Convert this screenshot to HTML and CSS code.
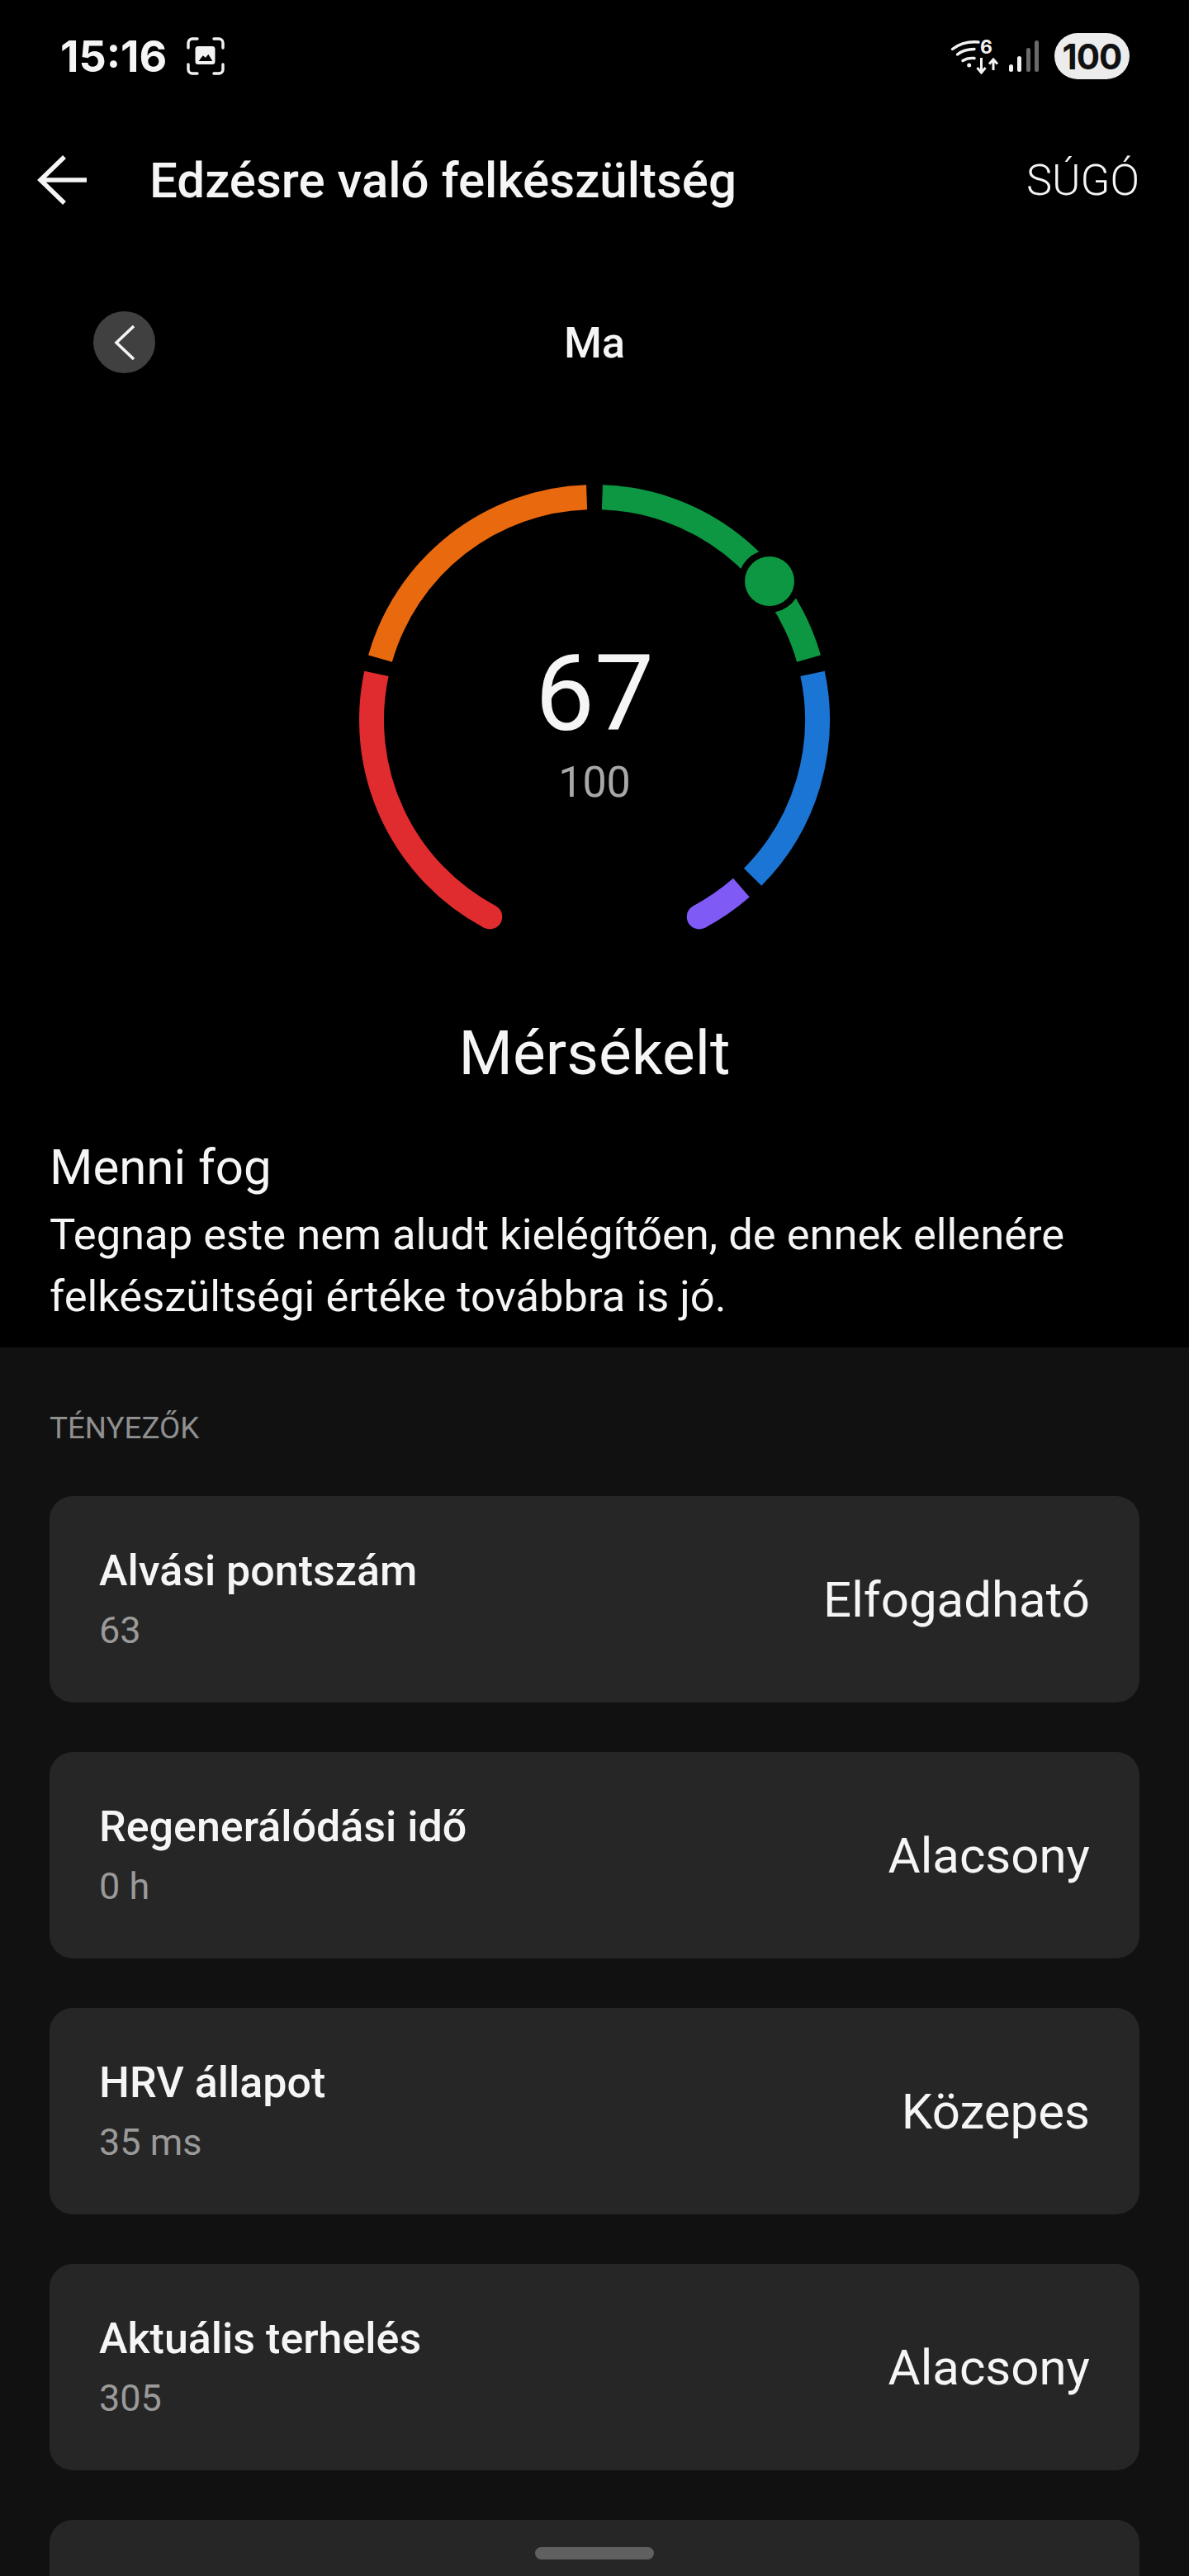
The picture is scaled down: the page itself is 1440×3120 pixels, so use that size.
FILE: index.html
```html
<!DOCTYPE html>
<html lang="hu">
<head>
    <meta charset="UTF-8">
    <meta name="viewport" content="width=device-width, initial-scale=1.0">
    <title>Edzésre való felkészültség</title>
    <link rel="stylesheet" href="styles.css">
</head>
<body>

<div class="status-bar">
    <div class="status-left">
        <span class="status-time">15:16</span>
        <svg class="status-shot" width="46" height="46" viewBox="0 0 46 46">
            <path d="M2 13V7a5 5 0 0 1 5-5h6M33 2h6a5 5 0 0 1 5 5v6M44 33v6a5 5 0 0 1-5 5h-6M13 44H7a5 5 0 0 1-5-5v-6" fill="none" stroke="#f2f2f2" stroke-width="3.4" stroke-linecap="round"/>
            <path fill-rule="evenodd" d="M14 11h17a3.5 3.5 0 0 1 3.5 3.5v15a3.5 3.5 0 0 1-3.5 3.5H14a3.5 3.5 0 0 1-3.500-3.500v-15A3.5 3.5 0 0 1 14 11zM14.7 29h16.600l-5-8.300-3.300 4-3.300-2.400z" fill="#f2f2f2"/>
        </svg>
    </div>
    <div class="status-right">
        <svg class="status-wifi" width="60" height="48" viewBox="0 -6 60 48">
            <path d="M2.5 11.5C11 5 22 2 34 3M8.5 18C14 13.5 21 11.5 29 11.5M15 25.5C19 23 24 22 29 22.5" fill="none" stroke="#f2f2f2" stroke-width="3.4" stroke-linecap="round"/>
            <circle cx="22.7" cy="31" r="2.5" fill="#f2f2f2"/>
            <path d="M37.5 22V39M32.5 34L37.5 40L42.5 34M52 37V24.5M47 29.5L52 24L57 29.5" fill="none" stroke="#f2f2f2" stroke-width="3"/>
            <text class="wifi-six" x="36" y="17">6</text>
        </svg>
        <svg class="status-signal" width="38" height="38" viewBox="0 0 38 38">
            <rect x="1" y="29" width="5" height="9" rx="2.5" fill="#f2f2f2"/>
            <rect x="11" y="19" width="5" height="19" rx="2.5" fill="#f2f2f2"/>
            <rect x="22" y="9" width="5" height="29" rx="2.5" fill="#6b6b6b"/>
            <rect x="32" y="0" width="5" height="38" rx="2.5" fill="#6b6b6b"/>
        </svg>
        <span class="status-battery">100</span>
    </div>
</div>

<div class="app-bar">
    <svg class="back-arrow" width="60" height="60" viewBox="0 0 60 60">
        <path d="M33 2L4 30L33 58M4 30H60" fill="none" stroke="#f5f5f5" stroke-width="5.5"/>
    </svg>
    <h1 class="app-title">Edzésre való felkészültség</h1>
    <span class="app-help">SÚGÓ</span>
</div>

<div class="date-row">
    <div class="date-prev">
        <svg width="26" height="44" viewBox="0 0 26 44">
            <path d="M24 2L3 22L24 42" fill="none" stroke="#f5f5f5" stroke-width="3.6"/>
        </svg>
    </div>
    <span class="date-label">Ma</span>
</div>

<div class="gauge">
    <svg class="gauge-arcs" width="600" height="560" viewBox="420 572 600 560">
        <g fill="none" stroke-width="30">
            <path stroke="#e02c2f" d="M593.24 1110.4A270 270 0 0 1 455.9 815.86"/>
            <path stroke="#e9690f" d="M460.46 797.58A270 270 0 0 1 710.58 602.16"/>
            <path stroke="#0d9742" d="M729.42 602.16A270 270 0 0 1 979.54 797.58"/>
            <path stroke="#1b75d4" d="M984.1 815.86A270 270 0 0 1 911.58 1062.25"/>
            <path stroke="#7f5af5" d="M897.85 1075.15A270 270 0 0 1 846.76 1110.4"/>
        </g>
        <circle cx="593.24" cy="1110.4" r="15" fill="#e02c2f"/>
        <circle cx="846.76" cy="1110.4" r="15" fill="#7f5af5"/>
        <circle cx="932" cy="704" r="38" fill="#000"/>
        <circle cx="932" cy="704" r="30" fill="#0d9742"/>
    </svg>
    <div class="gauge-value">
        <span class="gauge-score">67</span>
        <span class="gauge-max">100</span>
    </div>
</div>

<div class="level">Mérsékelt</div>

<div class="advice">
    <div class="advice-title">Menni fog</div>
    <p class="advice-text">Tegnap este nem aludt kielégítően, de ennek ellenére felkészültségi értéke továbbra is jó.</p>
</div>

<div class="factors">
    <div class="factors-title">TÉNYEZŐK</div>

    <div class="factor-card">
        <div>
            <div class="factor-name">Alvási pontszám</div>
            <div class="factor-value">63</div>
        </div>
        <div class="factor-rating">Elfogadható</div>
    </div>
    <div class="factor-card">
        <div>
            <div class="factor-name">Regenerálódási idő</div>
            <div class="factor-value">0 h</div>
        </div>
        <div class="factor-rating">Alacsony</div>
    </div>
    <div class="factor-card">
        <div>
            <div class="factor-name">HRV állapot</div>
            <div class="factor-value">35 ms</div>
        </div>
        <div class="factor-rating">Közepes</div>
    </div>
    <div class="factor-card">
        <div>
            <div class="factor-name">Aktuális terhelés</div>
            <div class="factor-value">305</div>
        </div>
        <div class="factor-rating">Alacsony</div>
    </div>
    <div class="factor-card factor-card-cut"></div>
</div>

<div class="home-handle"></div>

</body>
</html>
```

FILE: styles.css
```css
html, body {
    margin: 0;
    height: 3120px;
    overflow: hidden;
}
body {
    background-color: #000;
    color: #f5f5f5;
    font-family: Roboto, "Liberation Sans", sans-serif;
    position: relative;
}
h1, p {
    margin: 0;
    font-weight: normal;
}

.status-bar {
    height: 136px;
    padding: 0 72px 0 73px;
    box-sizing: border-box;
    display: flex;
    justify-content: space-between;
    align-items: center;
}
.status-left, .status-right {
    display: flex;
    align-items: center;
}
.status-time {
    font-family: Inter, Roboto, sans-serif;
    font-size: 52px;
    font-weight: 700;
}
.status-shot {
    margin-left: 24px;
}
.status-wifi {
    margin-bottom: 4px;
}
.wifi-six {
    font-family: Inter, sans-serif;
    font-size: 23px;
    font-weight: 700;
    fill: #f2f2f2;
}
.status-signal {
    margin-left: 10px;
}
.status-battery {
    margin-left: 18px;
    width: 91px;
    height: 56px;
    border-radius: 28px;
    background-color: #ececec;
    color: #111;
    font-family: Inter, Roboto, sans-serif;
    font-size: 42px;
    font-weight: 700;
    letter-spacing: -1px;
    display: flex;
    justify-content: center;
    align-items: center;
}

.app-bar {
    height: 164px;
    padding: 0 60px 0 45px;
    display: flex;
    align-items: center;
}
.back-arrow {
    flex: none;
}
.app-title {
    margin-left: 76px;
    flex: 1;
    font-size: 60px;
    font-weight: 500;
}
.app-help {
    font-size: 52.5px;
    font-weight: 300;
}

.date-row {
    height: 76px;
    margin-top: 77px;
    display: flex;
    justify-content: center;
    align-items: center;
    position: relative;
}
.date-prev {
    position: absolute;
    left: 113px;
    top: 0;
    width: 75px;
    height: 75px;
    border-radius: 50%;
    background-color: #404040;
    display: flex;
    justify-content: center;
    align-items: center;
}
.date-label {
    font-size: 52.5px;
    font-weight: 500;
}

.gauge {
    margin-top: 119px;
    height: 560px;
    position: relative;
    display: flex;
    justify-content: center;
}
.gauge-value {
    position: absolute;
    left: 0;
    right: 0;
    top: 200px;
    display: flex;
    flex-direction: column;
    align-items: center;
}
.gauge-score {
    font-size: 128px;
    line-height: 136px;
}
.gauge-max {
    margin-top: 10px;
    font-size: 52px;
    line-height: 60px;
    color: #a8a8a8;
}

.level {
    margin-top: 99px;
    text-align: center;
    font-size: 75px;
    line-height: 88px;
}

.advice {
    margin-top: 55px;
    padding: 0 60px 24px;
}
.advice-title {
    font-size: 60px;
    line-height: 80px;
}
.advice-text {
    margin-top: 4px;
    font-size: 52.5px;
    line-height: 75px;
}

.factors {
    padding: 70px 60px 0;
    background-color: #111;
}
.factors-title {
    margin-bottom: 54px;
    font-size: 36.75px;
    line-height: 56px;
    color: #8f8f8f;
}
.factor-card {
    height: 250px;
    margin-bottom: 60px;
    padding: 0 60px;
    border-radius: 28px;
    background-color: #262626;
    display: flex;
    justify-content: space-between;
    align-items: center;
}
.factor-card-cut {
    height: 68px;
    margin-bottom: 0;
    border-radius: 28px 28px 0 0;
}
.factor-name {
    font-size: 52px;
    font-weight: 500;
    line-height: 64px;
}
.factor-value {
    margin-top: 12px;
    font-size: 45px;
    line-height: 56px;
    color: #9a9a9a;
}
.factor-rating {
    font-size: 60px;
}

.home-handle {
    position: absolute;
    top: 3085px;
    left: 648px;
    width: 144px;
    height: 15px;
    border-radius: 8px;
    background-color: #606060;
}
```
